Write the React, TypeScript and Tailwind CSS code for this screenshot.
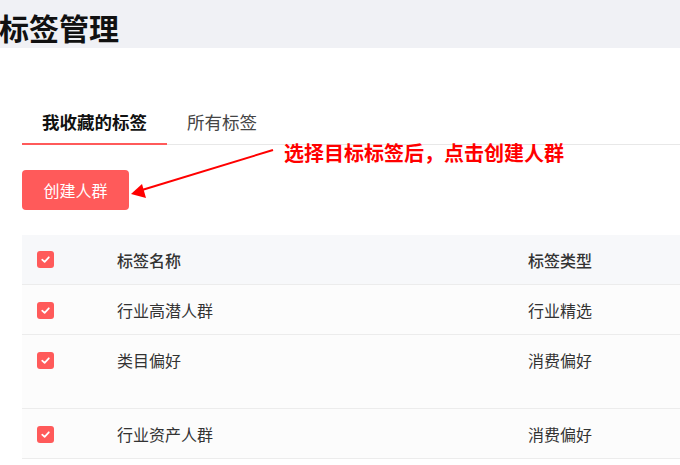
const rows = [
  { name: '行业高潜人群', type: '行业精选', tall: false },
  { name: '类目偏好', type: '消费偏好', tall: true },
  { name: '行业资产人群', type: '消费偏好', tall: false },
];

function Check() {
  return (
    <span className="w-[17px] h-[17px] rounded-[3px] bg-[#ff5a5a] flex items-center justify-center shrink-0">
      <svg width="11" height="11" viewBox="0 0 10 10" fill="none">
        <path d="M2 5.2 L4.2 7.2 L8 3" stroke="#fff" strokeWidth="1.6" strokeLinecap="round" strokeLinejoin="round" />
      </svg>
    </span>
  );
}

export default function App() {
  return (
    <div
      className="relative w-[680px] h-[465px] overflow-hidden bg-white text-[#333]"
      style={{ fontFamily: '"Noto Sans CJK SC", "Noto Sans", sans-serif' }}
    >
      {/* Header */}
      <div className="h-[48px] bg-[#f0f1f5] pt-[6px]">
        <h1 className="text-[30px] leading-[42px] font-bold text-[#111] -ml-[1px]">标签管理</h1>
      </div>

      {/* Tabs */}
      <div className="mt-[62px] ml-[22px] flex border-b border-[#e8e8e8]">
        <div className="px-[20px] pb-[9px] text-[17.5px] leading-[24px] font-bold text-[#111] border-b-2 border-[#ff5a5a] -mb-px">
          我收藏的标签
        </div>
        <div className="px-[20px] pb-[9px] text-[17.5px] leading-[24px] text-[#444]">所有标签</div>
      </div>

      {/* Button */}
      <div className="ml-[22px] mt-[25px]">
        <button className="h-[40px] w-[107px] rounded-[4px] bg-[#ff5a5a] text-white text-[16px]">创建人群</button>
      </div>

      {/* Table */}
      <div className="ml-[22px] mt-[25px] text-[16px]">
        <div className="h-[50px] bg-[#f7f8fa] border-b border-[#ececec] flex items-center font-medium text-[#333]">
          <div className="w-[95px] pl-[15px]"><Check /></div>
          <div className="w-[411px]">标签名称</div>
          <div className="flex-1">标签类型</div>
        </div>
        {rows.map((r) => (
          <div
            key={r.name}
            className={`bg-[#fcfcfc] border-b border-[#ececec] flex items-start pt-[13px] ${r.tall ? 'h-[74px]' : 'h-[50px]'}`}
          >
            <div className="w-[95px] pl-[15px] h-[24px] flex items-center"><Check /></div>
            <div className="w-[411px] leading-[24px]">{r.name}</div>
            <div className="flex-1 leading-[24px]">{r.type}</div>
          </div>
        ))}
      </div>

      {/* Annotation */}
      <div className="absolute left-[284px] top-[140px] text-[20px] leading-[26px] font-bold text-[#f00] whitespace-nowrap">
        选择目标标签后，点击创建人群
      </div>
      <svg className="absolute left-0 top-0 pointer-events-none" width="680" height="465">
        <line x1="273" y1="150" x2="142" y2="190" stroke="#f00" strokeWidth="2" />
        <polygon points="131,194 142,184 146,198" fill="#f00" />
      </svg>
    </div>
  );
}
